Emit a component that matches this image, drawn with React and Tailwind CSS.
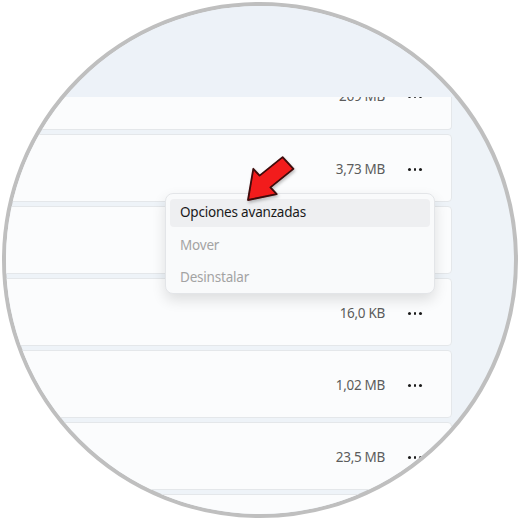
import React from 'react';

const sizes = ['3,73 MB', null, '16,0 KB', '1,02 MB', '23,5 MB', null];

const Dots = () => (
  <div className="w-[32px] h-[20px] flex items-center justify-center gap-[3px]">
    <span className="w-[2.5px] h-[2.5px] rounded-full bg-[#1b1b1b]"></span>
    <span className="w-[2.5px] h-[2.5px] rounded-full bg-[#1b1b1b]"></span>
    <span className="w-[2.5px] h-[2.5px] rounded-full bg-[#1b1b1b]"></span>
  </div>
);

const RowContent = ({ size }) => (
  <div className="h-full flex items-center justify-end pr-[20px] pt-[3px]">
    {size && <span className="text-[13.5px] text-[#5c5c5c] tracking-[-0.3px]">{size}</span>}
    <div className="ml-[14px]">
      <Dots />
    </div>
  </div>
);

const App = () => {
  return (
    <div className="w-[520px] h-[520px] bg-white flex items-center justify-center" style={{ fontFamily: '"Noto Sans", "Open Sans", sans-serif' }}>
      <div className="relative w-[516px] h-[516px] rounded-full border-4 border-[#bfbfbf] overflow-hidden bg-[#eef3f8]">
        {/* header area covering the top of the list */}
        <div className="h-[91px] bg-[#edf2f8]"></div>

        {/* list of app rows */}
        <div className="flex flex-col gap-[4px] -ml-[20px] pr-[62px]">
          {/* first row, partly hidden under the header */}
          <div className="h-[33px] overflow-hidden bg-[#fbfcfd] border border-t-0 border-[#e4e7ea] rounded-b-[4px]">
            <div className="h-[68px] -mt-[36px]">
              <RowContent size="269 MB" />
            </div>
          </div>
          {sizes.map((s, i) => (
            <div key={i} className="h-[68px] shrink-0 bg-[#fbfcfd] border border-[#e4e7ea] rounded-[4px]">
              <RowContent size={s} />
            </div>
          ))}
        </div>

        {/* context menu */}
        <div className="absolute left-[159px] top-[187px] w-[270px] h-[101px] bg-[#f9fafb] border border-[#e3e5e8] rounded-[8px] shadow-[0_6px_14px_rgba(0,0,0,0.12)] px-[4px] pt-[5px] flex flex-col gap-[4px] text-[13.5px] tracking-[-0.2px]">
          <div className="h-[28px] rounded-[4px] bg-[#eeeff1] flex items-center pl-[10px] pb-[2px] text-[#1a1a1a]">
            Opciones avanzadas
          </div>
          <div className="h-[28px] flex items-center pl-[10px] text-[#a3a3a3]">Mover</div>
          <div className="h-[28px] flex items-center pl-[10px] text-[#a3a3a3]">Desinstalar</div>
        </div>

        {/* red pointer arrow */}
        <svg className="absolute inset-0 w-full h-full pointer-events-none" viewBox="6 6 508 508">
          <defs>
            <filter id="sh" x="-20%" y="-20%" width="140%" height="140%">
              <feDropShadow dx="1" dy="2" stdDeviation="1.5" floodColor="#000" floodOpacity="0.25" />
            </filter>
          </defs>
          <polygon
            points="248,200 276.7,194.2 270.4,187.4 293.4,168.9 282.6,157.1 259.6,175.6 253.3,168.8"
            fill="#f21d1d"
            stroke="#3d0808"
            strokeWidth="1.8"
            strokeLinejoin="round"
            filter="url(#sh)"
          />
        </svg>
      </div>
    </div>
  );
};

export default App;
